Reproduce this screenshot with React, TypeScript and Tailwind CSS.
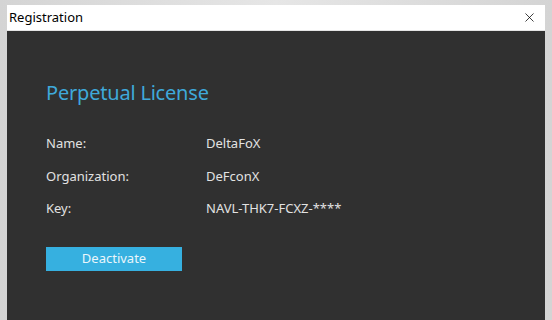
import { X } from "lucide-react";

const rows = [
  { label: "Name:", value: "DeltaFoX" },
  { label: "Organization:", value: "DeFconX" },
  { label: "Key:", value: "NAVL-THK7-FCXZ-****" },
];

export default function App() {
  return (
    <div className="flex h-[320px] w-[552px] flex-col bg-gradient-to-r from-[#d4d4d4] via-[#e6e6e6] to-[#d4d4d4] px-[7px] pt-[5px] font-['Noto_Sans',sans-serif]">
      <div className="flex h-[26px] items-center justify-between border-b border-[#e4e4e4] bg-white pl-[2px] pr-[8px]">
        <span className="text-[13px] text-black">Registration</span>
        <X className="h-[15px] w-[15px] text-black" strokeWidth={1.2} />
      </div>
      <div className="flex flex-1 flex-col bg-[#303030] pl-[39px] pt-[48px]">
        <h1 className="text-[20px] leading-[28px] tracking-[-0.2px] text-[#3fa9da]">Perpetual License</h1>
        <div className="mt-[27px] flex flex-col gap-[13.5px]">
          {rows.map((r) => (
            <div key={r.label} className="flex text-[13px] leading-[19px] text-[#e2e2e2]">
              <span className="w-[160px]">{r.label}</span>
              <span>{r.value}</span>
            </div>
          ))}
        </div>
        <button
          type="button"
          className="mt-[29px] h-[24px] w-[136px] bg-[#36b0e0] text-[13px] text-[#eaf6fb]"
        >
          Deactivate
        </button>
      </div>
    </div>
  );
}
